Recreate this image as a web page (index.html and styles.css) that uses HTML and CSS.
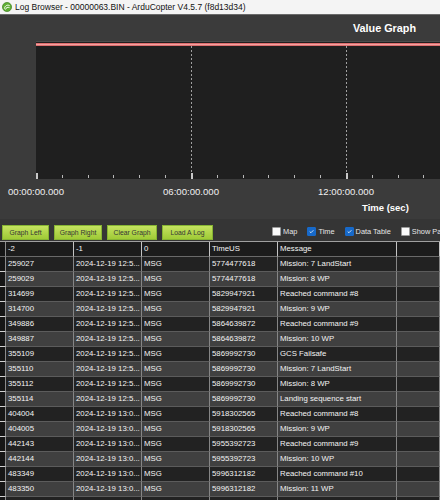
FILE: index.html
```html
<!DOCTYPE html>
<html>
<head>
<meta charset="utf-8">
<link rel="stylesheet" href="styles.css">
</head>
<body>
<div class="titlebar">
  <svg class="app-icon" viewBox="0 0 12 12"><circle cx="6" cy="6" r="5.5" fill="#5fae34"/><circle cx="6" cy="6" r="5.5" fill="none" stroke="#3d7d1e" stroke-width="0.8"/><path d="M3 7.5 C3.5 4, 7 3, 8.8 4.2 M4.2 8.6 C5 6.5, 7 5.8, 8.6 6.6" fill="none" stroke="#fff" stroke-width="1.2" stroke-linecap="round"/></svg>
  <span>Log Browser - 00000063.BIN - ArduCopter V4.5.7 (f8d13d34)</span>
</div>
<div class="graph">
  <div class="graph-head">Value Graph</div>
  <div class="plot">
    <div class="series"></div>
    <div class="vgrid g1"></div>
    <div class="vgrid g2"></div>
    <div class="ticks"></div>
    <div class="major m0"></div>
    <div class="major m1"></div>
    <div class="major m2"></div>
  </div>
  <div class="axis-labels"><span>00:00:00.000</span><span>06:00:00.000</span><span>12:00:00.000</span></div>
  <div class="axis-title">Time (sec)</div>
</div>
<div class="toolbar">
  <button class="btn w47">Graph Left</button>
  <button class="btn w48">Graph Right</button>
  <button class="btn w50">Clear Graph</button>
  <button class="btn w51">Load A Log</button>
  <div class="checks">
    <label class="chk"><span class="box"></span>Map</label>
    <label class="chk"><span class="box on"><svg viewBox="0 0 9 9"><path d="M2.2 4.6 L3.8 6.1 L6.9 2.9" fill="none" stroke="#fff" stroke-width="1"/></svg></span>Time</label>
    <label class="chk"><span class="box on"><svg viewBox="0 0 9 9"><path d="M2.2 4.6 L3.8 6.1 L6.9 2.9" fill="none" stroke="#fff" stroke-width="1"/></svg></span>Data Table</label>
    <label class="chk"><span class="box"></span>Show Params</label>
  </div>
</div>
<div class="table">
  <div class="row head"><div class="rh"></div><div>-2</div><div>-1</div><div>0</div><div>TimeUS</div><div>Message</div><div></div></div>
  <div class="row dark"><div class="rh"></div><div>259027</div><div>2024-12-19 12:5...</div><div>MSG</div><div>5774477618</div><div>Mission: 7 LandStart</div><div></div></div>
  <div class="row light"><div class="rh"></div><div>259029</div><div>2024-12-19 12:5...</div><div>MSG</div><div>5774477618</div><div>Mission: 8 WP</div><div></div></div>
  <div class="row dark"><div class="rh"></div><div>314699</div><div>2024-12-19 12:5...</div><div>MSG</div><div>5829947921</div><div>Reached command #8</div><div></div></div>
  <div class="row light"><div class="rh"></div><div>314700</div><div>2024-12-19 12:5...</div><div>MSG</div><div>5829947921</div><div>Mission: 9 WP</div><div></div></div>
  <div class="row dark"><div class="rh"></div><div>349886</div><div>2024-12-19 12:5...</div><div>MSG</div><div>5864639872</div><div>Reached command #9</div><div></div></div>
  <div class="row light"><div class="rh"></div><div>349887</div><div>2024-12-19 12:5...</div><div>MSG</div><div>5864639872</div><div>Mission: 10 WP</div><div></div></div>
  <div class="row dark"><div class="rh"></div><div>355109</div><div>2024-12-19 12:5...</div><div>MSG</div><div>5869992730</div><div>GCS Failsafe</div><div></div></div>
  <div class="row light"><div class="rh"></div><div>355110</div><div>2024-12-19 12:5...</div><div>MSG</div><div>5869992730</div><div>Mission: 7 LandStart</div><div></div></div>
  <div class="row dark"><div class="rh"></div><div>355112</div><div>2024-12-19 12:5...</div><div>MSG</div><div>5869992730</div><div>Mission: 8 WP</div><div></div></div>
  <div class="row light"><div class="rh"></div><div>355114</div><div>2024-12-19 12:5...</div><div>MSG</div><div>5869992730</div><div>Landing sequence start</div><div></div></div>
  <div class="row dark"><div class="rh"></div><div>404004</div><div>2024-12-19 13:0...</div><div>MSG</div><div>5918302565</div><div>Reached command #8</div><div></div></div>
  <div class="row light"><div class="rh"></div><div>404005</div><div>2024-12-19 13:0...</div><div>MSG</div><div>5918302565</div><div>Mission: 9 WP</div><div></div></div>
  <div class="row dark"><div class="rh"></div><div>442143</div><div>2024-12-19 13:0...</div><div>MSG</div><div>5955392723</div><div>Reached command #9</div><div></div></div>
  <div class="row light"><div class="rh"></div><div>442144</div><div>2024-12-19 13:0...</div><div>MSG</div><div>5955392723</div><div>Mission: 10 WP</div><div></div></div>
  <div class="row dark"><div class="rh"></div><div>483349</div><div>2024-12-19 13:0...</div><div>MSG</div><div>5996312182</div><div>Reached command #10</div><div></div></div>
  <div class="row light"><div class="rh"></div><div>483350</div><div>2024-12-19 13:0...</div><div>MSG</div><div>5996312182</div><div>Mission: 11 WP</div><div></div></div>
  <div class="row dark"><div class="rh"></div><div></div><div></div><div></div><div></div><div></div><div></div></div>
</div>
</body>
</html>
```
FILE: styles.css
```css
* { box-sizing: border-box; }
html, body { margin: 0; padding: 0; }
body {
  width: 440px;
  height: 500px;
  overflow: hidden;
  background: #363636;
  font-family: "Liberation Sans", Arial, sans-serif;
}

.titlebar {
  height: 15px;
  background: #f4f4f4;
  border-bottom: 1px solid #6a6a6a;
  display: flex;
  align-items: center;
  gap: 3px;
  padding-left: 2px;
  font-size: 8.5px;
  color: #111;
  white-space: nowrap;
}
.app-icon { width: 10px; height: 10px; flex: none; }

.graph {
  height: 204px;
  background: #3b3b3b;
  display: flex;
  flex-direction: column;
  overflow: hidden;
}
.graph-head {
  height: 26px;
  display: flex;
  align-items: center;
  padding-left: 353px;
  font-weight: bold;
  font-size: 10.8px;
  color: #fff;
}
.plot {
  margin-left: 36px;
  height: 138px;
  flex: none;
  background: #1f1f1f;
  border-top: 1px solid #4c4c4c;
  position: relative;
}
.series {
  position: absolute;
  left: 0; right: 0; top: 1px;
  height: 3px;
  background: linear-gradient(#d45656, #f3a0a0 50%, #d45656);
}
.vgrid {
  position: absolute;
  top: 4px; bottom: 0;
  width: 1px;
  background: repeating-linear-gradient(to bottom, #a0a0a0 0 2px, transparent 2px 4px);
}
.g1 { left: 155px; }
.g2 { left: 310px; }
.ticks {
  position: absolute;
  left: 0; right: 0; bottom: 1px;
  height: 3px;
  background: repeating-linear-gradient(to right, #b8b8b8 0 1px, transparent 1px 25.83px);
}
.major {
  position: absolute;
  bottom: 0;
  width: 2px;
  height: 6px;
  background: #c8c8c8;
}
.m0 { left: 0; }
.m1 { left: 155px; }
.m2 { left: 310px; }

.axis-labels {
  display: flex;
  margin-left: -41.5px;
  margin-top: 5px;
  height: 15px;
  align-items: center;
  font-size: 9.6px;
  color: #f0f0f0;
}
.axis-labels span { width: 155px; flex: none; text-align: center; }
.axis-title {
  padding-left: 362px;
  height: 16px;
  display: flex;
  align-items: center;
  font-weight: bold;
  font-size: 9.5px;
  color: #fff;
}

.toolbar {
  height: 22px;
  background: #353535;
  display: flex;
  align-items: flex-start;
  padding: 6px 0 0 2px;
  gap: 5px;
  overflow: hidden;
}
.btn {
  flex: none;
  height: 15px;
  padding: 0;
  margin: 0;
  border: 1px solid #86b432;
  background: linear-gradient(#c4e260, #9fca36);
  color: #353535;
  font-family: "Liberation Sans", Arial, sans-serif;
  font-size: 6.8px;
  text-align: center;
  line-height: 13px;
  white-space: nowrap;
}
.w47 { width: 47px; }
.w48 { width: 48px; }
.w50 { width: 50px; }
.w51 { width: 51px; }
.checks {
  flex: none;
  margin-left: 54px;
  margin-top: 2px;
  display: flex;
  gap: 10px;
  white-space: nowrap;
}
.chk {
  flex: none;
  display: flex;
  align-items: center;
  gap: 2px;
  font-size: 7.4px;
  color: #e6e6e6;
  height: 9px;
}
.box {
  width: 9px;
  height: 9px;
  flex: none;
  background: #fafafa;
  border: 1px solid #9a9a9a;
  border-radius: 1px;
  display: flex;
}
.box.on { background: #1769c9; border-color: #1769c9; }
.box svg { width: 100%; height: 100%; }

.table {
  border-top: 1px solid #a0a0a0;
}
.row {
  display: grid;
  grid-template-columns: 6px 68px 68px 68px 68px 119px 43px;
  height: 15px;
  font-size: 7.8px;
  color: #f4f4f4;
}
.row > div {
  border-right: 1px solid #858585;
  border-bottom: 1px solid #5c5c5c;
  padding-left: 2px;
  line-height: 14px;
  white-space: nowrap;
  overflow: hidden;
}
.row > .rh {
  background: #161616;
  border-bottom-color: #d0d0d0;
  border-right-color: #8a8a8a;
  padding: 0;
}
.head { height: 15px; background: #1c1c1c; }
.head > div { border-right-color: #c4c4c4; border-bottom-color: #6a6a6a; }
.head > .rh { border-bottom-color: #6a6a6a; }
.dark { background: #222222; }
.light { background: #404040; }
```
